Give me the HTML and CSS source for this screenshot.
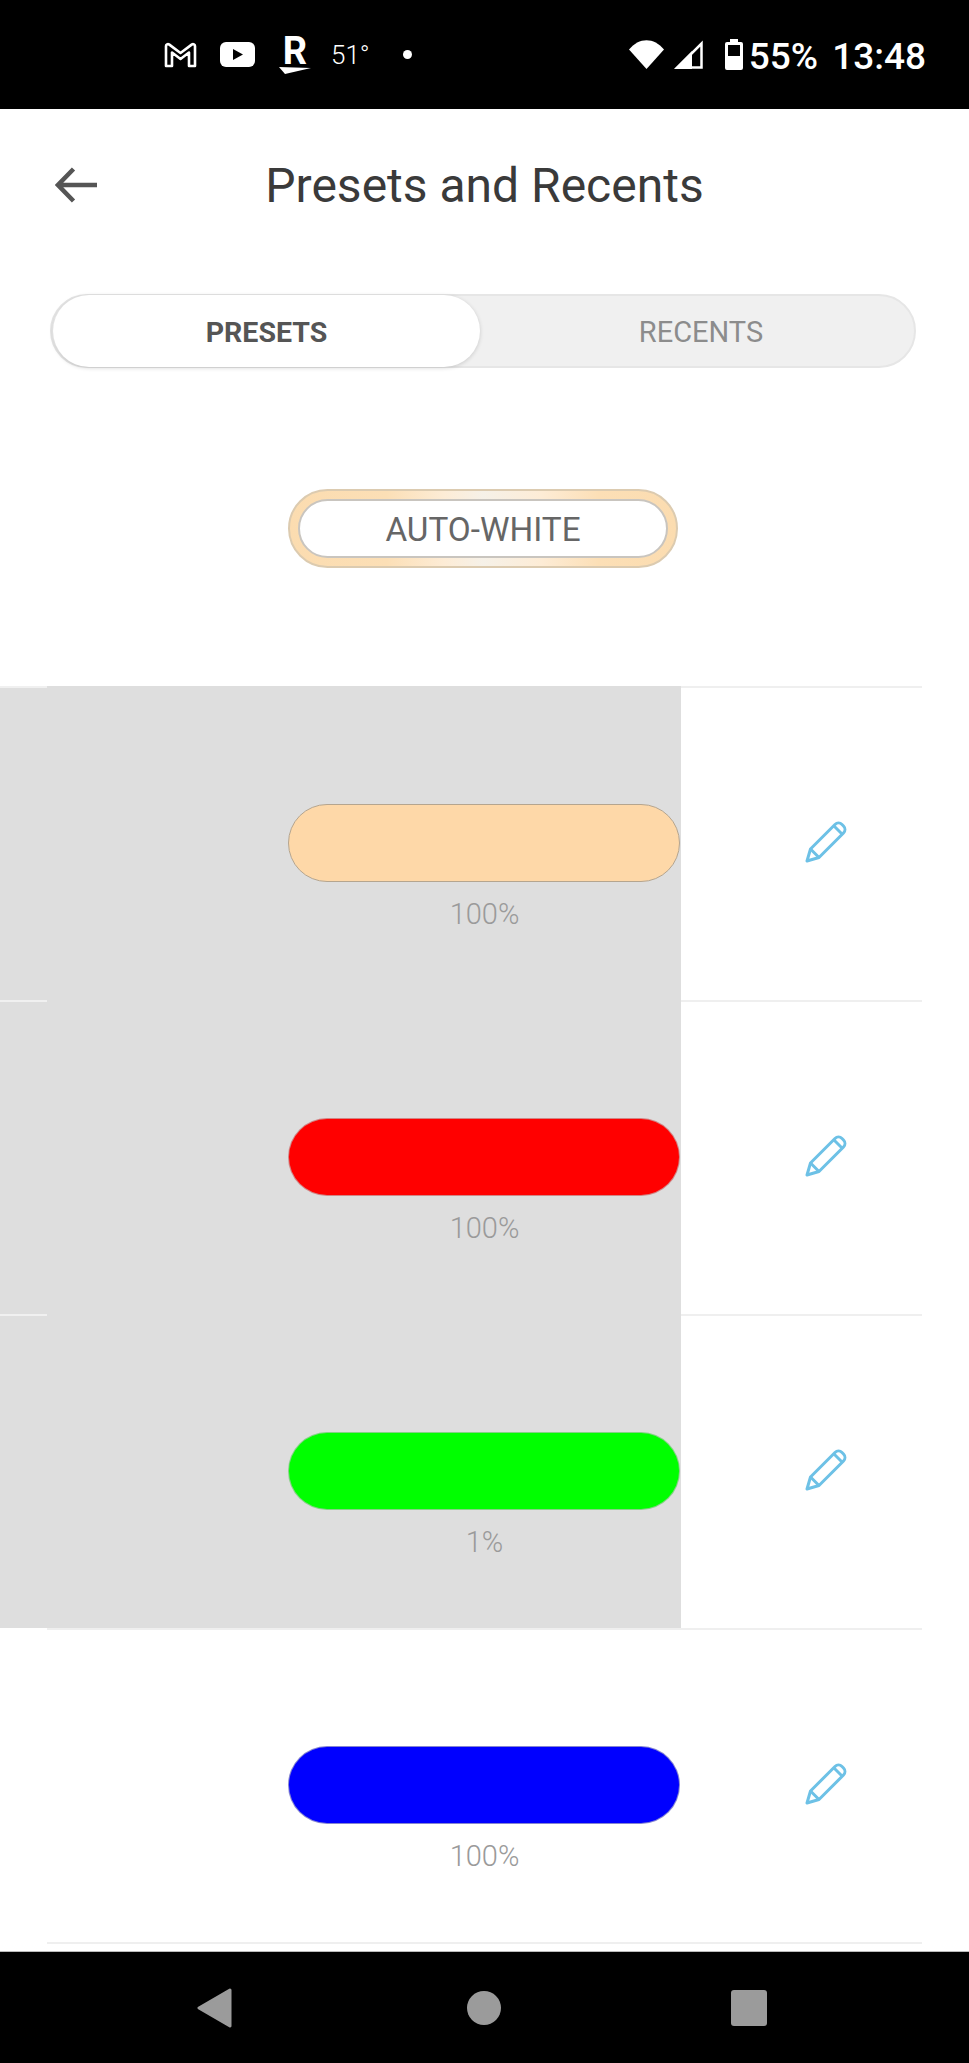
FILE: index.html
```html
<!DOCTYPE html>
<html lang="en">
<head>
    <meta charset="UTF-8">
    <meta name="viewport" content="width=device-width, initial-scale=1.0">
    <title>Presets and Recents</title>
    <link rel="stylesheet" href="styles.css">
</head>
<body>
    <div class="status-bar">
        <div class="status-left">
            <svg class="icon-mail" width="33" height="26" viewBox="0 0 33 26"><path d="M2 24V4a2 2 0 0 1 3-1.600L16.500 11 28 2.400A2 2 0 0 1 31 4v20H25V10.500L16.500 17 8 10.500V24Z" fill="none" stroke="#fff" stroke-width="2.600" stroke-linejoin="round"/></svg>
            <svg class="icon-video" width="35" height="25" viewBox="0 0 35 25"><rect width="35" height="25" rx="6" fill="#fff"/><path d="M13 7l10 5.500L13 18Z" fill="#000"/></svg>
            <div class="logo-r">
                <span class="r-letter">R</span>
                <svg class="r-swoosh" width="32" height="7" viewBox="0 0 32 7"><path d="M0 0L32 1 6 7Z" fill="#fff"/></svg>
            </div>
            <span class="temp">51°</span>
            <span class="dot"></span>
        </div>
        <div class="status-right">
            <svg class="icon-wifi" width="35" height="29" viewBox="0 0 35 29"><path d="M0 9.500C10-3 25-3 35 9.500L17.500 29Z" fill="#fff"/></svg>
            <svg class="icon-signal" width="29" height="29" viewBox="0 0 29 29"><path d="M27.500 3.500V27.500H3.500Z" fill="none" stroke="#fff" stroke-width="2.500"/><path d="M0 29L18 11V29Z" fill="#fff"/></svg>
            <svg class="icon-battery" width="18" height="31" viewBox="0 0 18 31"><path d="M5 0h8v3h3a2 2 0 0 1 2 2v24a2 2 0 0 1-2 2H2a2 2 0 0 1-2-2V5a2 2 0 0 1 2-2h3Z" fill="#fff"/><rect x="3" y="6" width="12" height="11" fill="#000"/></svg>
            <span class="battery-text">55%</span>
            <span class="clock">13:48</span>
        </div>
    </div>

    <div class="app">
        <div class="app-header">
            <svg class="back-arrow" width="42" height="36" viewBox="0 0 42 36"><path d="M42 18H4M18.500 2L3 18l15.500 16" fill="none" stroke="#555" stroke-width="4.500"/></svg>
            <h1>Presets and Recents</h1>
        </div>

        <div class="tabs">
            <div class="tab tab-active">PRESETS</div>
            <div class="tab">RECENTS</div>
        </div>

        <div class="auto-white">
            <div class="auto-white-inner">AUTO-WHITE</div>
        </div>

        <div class="preset-list">
            <div class="divider divider-swiped"></div>
            <div class="preset-row">
                <div class="preset-main swiped">
                    <div class="swatch swatch-warm"></div>
                    <div class="percent">100%</div>
                </div>
                <div class="preset-edit">
                    <svg class="pencil" width="42" height="42" viewBox="0 0 42 42"><use href="#pencil-shape"/></svg>
                </div>
            </div>
            <div class="divider divider-swiped"></div>
            <div class="preset-row">
                <div class="preset-main swiped">
                    <div class="swatch swatch-red"></div>
                    <div class="percent">100%</div>
                </div>
                <div class="preset-edit">
                    <svg class="pencil" width="42" height="42" viewBox="0 0 42 42"><use href="#pencil-shape"/></svg>
                </div>
            </div>
            <div class="divider divider-swiped"></div>
            <div class="preset-row">
                <div class="preset-main swiped">
                    <div class="swatch swatch-green"></div>
                    <div class="percent">1%</div>
                </div>
                <div class="preset-edit">
                    <svg class="pencil" width="42" height="42" viewBox="0 0 42 42"><use href="#pencil-shape"/></svg>
                </div>
            </div>
            <div class="divider"></div>
            <div class="preset-row">
                <div class="preset-main">
                    <div class="swatch swatch-blue"></div>
                    <div class="percent">100%</div>
                </div>
                <div class="preset-edit">
                    <svg class="pencil" width="42" height="42" viewBox="0 0 42 42"><use href="#pencil-shape"/></svg>
                </div>
            </div>
            <div class="divider"></div>
        </div>
    </div>

    <div class="nav-bar">
        <svg width="36" height="40" viewBox="0 0 36 40"><path d="M33 2L2 20l31 18Z" fill="#9b9b9b" stroke="#9b9b9b" stroke-width="3" stroke-linejoin="round"/></svg>
        <span class="nav-home"></span>
        <span class="nav-square"></span>
    </div>

    <svg class="defs" width="0" height="0">
        <defs>
            <g id="pencil-shape" fill="none" stroke="#6dc1e6" stroke-width="3" stroke-linejoin="round">
                <path d="M2 40L5.500 28 30 3.500a5 5 0 0 1 7 0l1.500 1.500a5 5 0 0 1 0 7L14 36.500Z"/>
                <path d="M5.500 28L14 36.500M29 5l8 8"/>
            </g>
        </defs>
    </svg>
</body>
</html>
```

FILE: styles.css
```css
* {
    box-sizing: border-box;
}

body {
    margin: 0;
    height: 2063px;
    overflow: hidden;
    display: flex;
    flex-direction: column;
    background: white;
    font-family: Roboto, "Liberation Sans", sans-serif;
}

.defs {
    display: none;
}

/* status bar */
.status-bar {
    height: 109px;
    flex-shrink: 0;
    background: #000;
    color: white;
    display: flex;
    align-items: center;
    justify-content: space-between;
    padding: 0 43px 0 164px;
}

.status-left,
.status-right {
    display: flex;
    align-items: center;
}

.icon-video {
    margin-left: 23px;
}

.logo-r {
    width: 32px;
    margin-left: 24px;
    display: flex;
    flex-direction: column;
    align-items: center;
}

.r-letter {
    font-size: 38px;
    line-height: 32px;
    font-weight: 700;
}

.r-swoosh {
    display: block;
}

.temp {
    margin-left: 20px;
    font-size: 26px;
    font-weight: 300;
}

.dot {
    width: 9px;
    height: 9px;
    margin-left: 33px;
    border-radius: 50%;
    background: white;
}

.icon-signal {
    margin-left: 10px;
}

.icon-battery {
    margin-left: 22px;
}

.battery-text {
    margin: 3px 0 0 6px;
    font-size: 37px;
    font-weight: 500;
}

.clock {
    margin: 3px 0 0 14px;
    font-size: 37px;
    font-weight: 500;
}

/* page */
.app {
    flex: 1;
    overflow: hidden;
}

.app-header {
    height: 152px;
    display: grid;
    grid-template-columns: 1fr auto 1fr;
    align-items: center;
    padding: 0 55px;
}

.app-header h1 {
    margin: 0;
    font-size: 48px;
    font-weight: 400;
    color: #3a3a3a;
}

.tabs {
    height: 74px;
    margin: 33px 53px 0 50px;
    display: flex;
    background: #f0f0f0;
    border: 2px solid #e6e6e6;
    border-radius: 37px;
}

.tab {
    flex: 1;
    display: flex;
    align-items: center;
    justify-content: center;
    padding: 2px 0 0 8px;
    font-size: 29px;
    font-weight: 400;
    color: #8c8c8c;
}

.tab-active {
    flex: none;
    width: 427px;
    padding-left: 0;
    margin: -1px 0 -1px 1px;
    background: white;
    border-radius: 36px;
    box-shadow: 0 1px 4px rgba(0, 0, 0, 0.16);
    font-size: 28.500px;
    font-weight: 700;
    color: #555;
}

.auto-white {
    width: 390px;
    height: 79px;
    margin: 121px 0 0 288px;
    padding: 8px;
    border: 2px solid #dccbb0;
    border-radius: 40px;
    background: linear-gradient(to right, #fbdcb0, #fcdfb6 25%, #fdecd6 40%, #f6f1e8 50%, #fdecd6 65%, #fcdfb6 80%, #fbdcb0);
}

.auto-white-inner {
    height: 100%;
    display: flex;
    align-items: center;
    justify-content: center;
    padding-top: 2px;
    background: white;
    border: 2px solid #c9c5bf;
    border-radius: 30px;
    font-size: 33.300px;
    font-weight: 400;
    color: #666;
}

.preset-list {
    margin-top: 118px;
}

.divider {
    height: 2px;
    margin: 0 47px;
    background: #efefef;
}

.divider-swiped {
    margin: 0 47px 0 0;
    background: linear-gradient(to right, #f0f0f0 47px, #dedede 47px, #dedede 681px, #efefef 681px);
}

.preset-row {
    height: 312px;
    display: flex;
}

.preset-main {
    width: 681px;
    padding: 116px 0 0 288px;
}

.swiped {
    background: #dedede;
}

.swatch {
    width: 392px;
    height: 78px;
    border: 1px solid rgba(190, 190, 190, 0.7);
    border-radius: 39px;
}

.swatch-warm {
    background: #fed8a8;
    border-color: #b5a58f;
}

.swatch-red {
    background: #ff0000;
}

.swatch-green {
    background: #00ff00;
}

.swatch-blue {
    background: #0000ff;
}

.percent {
    margin-top: 15px;
    text-align: center;
    font-size: 29px;
    font-weight: 300;
    color: #9a9a9a;
}

.preset-edit {
    padding: 133px 0 0 124px;
}

/* navigation */
.nav-bar {
    height: 112px;
    flex-shrink: 0;
    display: flex;
    align-items: center;
    background: #000;
    border-top: 1px solid #bbb;
    padding: 0 0 0 197px;
}

.nav-home {
    width: 34px;
    height: 34px;
    margin-left: 234px;
    border-radius: 50%;
    background: #9b9b9b;
}

.nav-square {
    width: 36px;
    height: 36px;
    margin-left: 230px;
    border-radius: 3px;
    background: #9b9b9b;
}
```
